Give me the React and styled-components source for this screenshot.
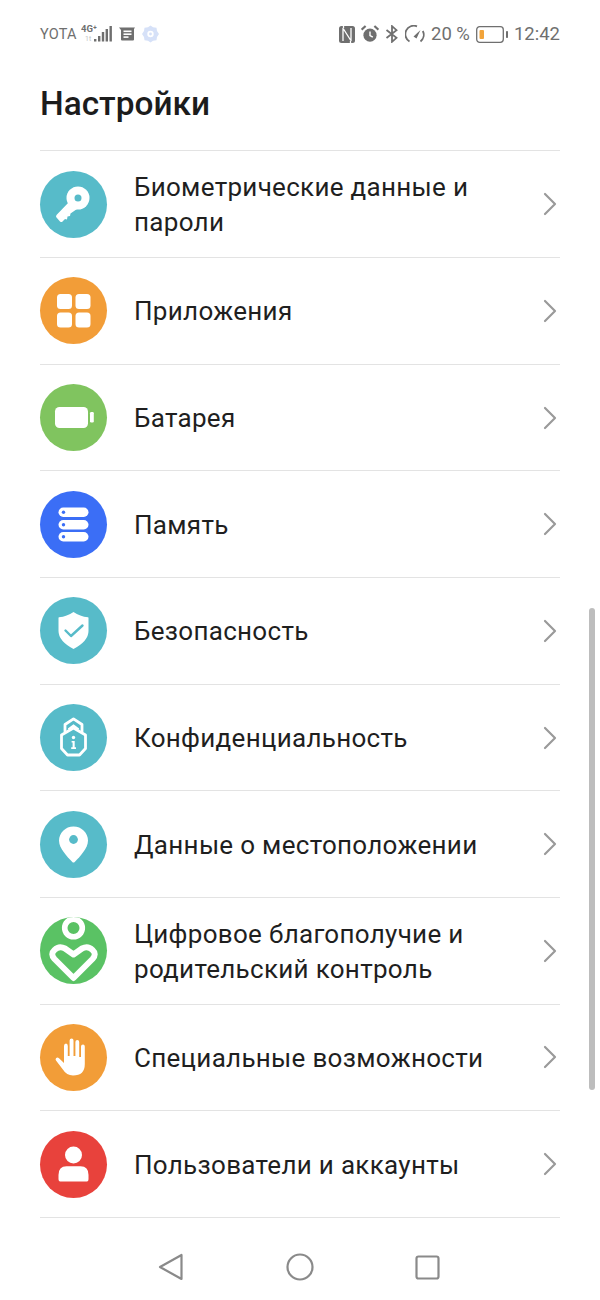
import React from 'react';
import styled, { createGlobalStyle } from 'styled-components';

const GlobalStyle = createGlobalStyle`
  html, body { margin: 0; padding: 0; background: #fff; }
  body { font-family: Roboto, "Noto Sans", sans-serif; }
`;

const Screen = styled.div`
  position: relative;
  width: 600px;
  height: 1300px;
  overflow: hidden;
  background: #fff;
  display: flex;
  flex-direction: column;
`;

const StatusBar = styled.div`
  height: 68px;
  flex: none;
  padding: 0 40px;
  display: flex;
  align-items: center;
  justify-content: space-between;
  color: #6f6f6f;
`;

const StatusGroup = styled.div`
  display: flex;
  align-items: center;
  gap: ${p => p.$gap || 6}px;
`;

const Carrier = styled.span`
  font-size: 14.5px;
  letter-spacing: 0.2px;
`;

const StatusText = styled.span`
  font-size: 18.5px;
`;

const Title = styled.h1`
  margin: 0;
  padding: 0 40px;
  height: 82.4px;
  flex: none;
  font-size: 33.4px;
  line-height: 72px;
  font-weight: 500;
  color: #1c1c1c;
`;

const List = styled.div`
  margin: 0 40px;
  border-top: 1px solid #e3e3e3;
`;

const Row = styled.div`
  height: 106.67px;
  box-sizing: border-box;
  border-bottom: 1px solid #e3e3e3;
  display: flex;
  align-items: center;
`;

const IconCircle = styled.div`
  width: 67px;
  height: 67px;
  flex: none;
  border-radius: 50%;
  background: ${p => p.$color};
  overflow: hidden;
  margin-right: 27px;

  svg { display: block; }
`;

const Label = styled.div`
  flex: 1;
  padding-top: 2px;
  font-size: 26px;
  letter-spacing: 0.3px;
  line-height: 35px;
  color: #1f1f1f;
`;

const Chevron = styled.svg`
  flex: none;
  width: 14px;
  height: 24px;
  margin-right: 3px;
`;

const Scrollbar = styled.div`
  position: absolute;
  left: 589px;
  top: 608px;
  width: 6px;
  height: 482px;
  border-radius: 3px;
  background: #bdbdbd;
`;

const NavBar = styled.div`
  position: absolute;
  left: 0;
  right: 0;
  top: 1218px;
  height: 82px;
  background: #fff;
  display: flex;
  align-items: center;
  padding: 16px 160px 0 158px;
  justify-content: space-between;
  box-sizing: border-box;
`;

const Svg = ({ s = 67, children }) => (
  <svg width={s} height={s} viewBox="0 0 67 67">{children}</svg>
);

const KeyIcon = ({ bg }) => (
  <Svg>
    <circle cx="38" cy="27" r="11.5" fill="#fff" />
    <circle cx="38" cy="27" r="3.5" fill={bg} />
    <path d="M29.5 30.5 L16.5 44 Q15.5 45.5 16.5 46.5 L20 50.5 Q21.5 51.5 22.5 50.5 L25 48 L27 48.5 L27.5 45.5 L30 45 L30.5 42.5 L37 38 Z" fill="#fff" />
  </Svg>
);

const AppsIcon = () => (
  <Svg>
    <rect x="17" y="17" width="15" height="15" rx="3.5" fill="#fff" />
    <rect x="35.5" y="17" width="15" height="15" rx="3.5" fill="#fff" />
    <rect x="17" y="35.5" width="15" height="15" rx="3.5" fill="#fff" />
    <rect x="35.5" y="35.5" width="15" height="15" rx="3.5" fill="#fff" />
  </Svg>
);

const BatteryIcon = () => (
  <Svg>
    <rect x="15" y="23" width="33" height="21" rx="4.5" fill="#fff" />
    <rect x="50" y="28" width="3.8" height="10.5" rx="1.2" fill="#fff" />
  </Svg>
);

const StorageIcon = ({ bg }) => (
  <Svg>
    {[16.5, 29, 41].map(y => (
      <g key={y}>
        <rect x="18.5" y={y} width="30" height="9.5" rx="4.75" fill="#fff" />
        <circle cx="23.5" cy={y + 4.75} r="1.7" fill={bg} />
      </g>
    ))}
  </Svg>
);

const ShieldIcon = ({ bg }) => (
  <Svg>
    <path d="M33.5 15 Q40 19.5 48 20.3 Q48.5 20.4 48.5 21 L48.5 34 Q48.5 44 33.5 52 Q18.5 44 18.5 34 L18.5 21 Q18.5 20.4 19 20.3 Q27 19.5 33.5 15 Z" fill="#fff" />
    <path d="M25.5 33.5 L31 39 L42.5 28.5" fill="none" stroke={bg} strokeWidth="2.4" strokeLinecap="round" strokeLinejoin="round" />
  </Svg>
);

const PrivacyIcon = () => (
  <Svg>
    <path d="M25 28 L25 20.5 L33.5 14.8 L42 20.5 L42 28" fill="none" stroke="#fff" strokeWidth="2.8" strokeLinejoin="round" />
    <path d="M28.5 25.5 L33.5 21.8 L38.5 25.5" fill="none" stroke="#fff" strokeWidth="2.4" />
    <path d="M33.5 24 L45.5 31 L45.5 44.5 L39.5 51 L27.5 51 L21.5 44.5 L21.5 31 Z" fill="none" stroke="#fff" strokeWidth="2.8" strokeLinejoin="round" />
    <circle cx="33.5" cy="33.5" r="1.7" fill="#fff" />
    <path d="M31.6 37 L34.7 37 L34.7 43.2 L36 43.2 L36 45 L31.2 45 L31.2 43.2 L32.6 43.2 L32.6 38.6 L31.6 38.6 Z" fill="#fff" />
  </Svg>
);

const PinIcon = ({ bg }) => (
  <Svg>
    <path d="M33.5 15.5 C41.6 15.5 48 21.8 48 29.7 C48 37 40 45.5 34.7 51 Q33.5 52.2 32.3 51 C27 45.5 19 37 19 29.7 C19 21.8 25.4 15.5 33.5 15.5 Z" fill="#fff" />
    <circle cx="33.5" cy="28.5" r="4.4" fill={bg} />
  </Svg>
);

const WellbeingIcon = () => (
  <Svg>
    <circle cx="33.5" cy="11" r="8.8" fill="none" stroke="#fff" strokeWidth="5.6" />
    <path d="M33.5 61 L14.5 42 Q10 37 14.5 33 Q19 28.5 25 31.5 L33.5 37.5 L42 31.5 Q48 28.5 52.5 33 Q57 37 52.5 42 Z" fill="none" stroke="#fff" strokeWidth="6" strokeLinejoin="round" />
  </Svg>
);

const HandIcon = () => (
  <Svg>
    <path d="M24 33 L24 22 Q24 19.5 26 19.5 Q27.8 19.5 27.8 22 L27.8 32 L29.6 32 L29.6 16.5 Q29.6 14.5 31.6 14.5 Q33.5 14.5 33.5 16.5 L33.5 32 L35.4 32 L35.4 18 Q35.4 16 37.3 16 Q39.2 16 39.2 18 L39.2 33 L41 33 L41 22.5 Q41 20.5 43 20.5 Q44.8 20.5 44.8 22.5 L44.8 40 Q44.8 51.5 33 51.5 Q26.5 51.5 22.5 45 L16 36.5 Q15 35 16.2 34 Q17.6 33 19 34.2 L24 39 Z" fill="#fff" />
  </Svg>
);

const UserIcon = () => (
  <Svg>
    <circle cx="33.5" cy="24" r="8.5" fill="#fff" />
    <path d="M26.5 35.3 L40.5 35.3 Q48.5 35.3 48.5 44 L48.5 48 Q48.5 50.6 46 50.6 L21 50.6 Q18.5 50.6 18.5 48 L18.5 44 Q18.5 35.3 26.5 35.3 Z" fill="#fff" />
  </Svg>
);

const TEAL = '#57bbc9';

const items = [
  { label: ['Биометрические данные и', 'пароли'], color: TEAL, Icon: KeyIcon },
  { label: ['Приложения'], color: '#f29d38', Icon: AppsIcon },
  { label: ['Батарея'], color: '#80c45f', Icon: BatteryIcon },
  { label: ['Память'], color: '#3b6ef6', Icon: StorageIcon },
  { label: ['Безопасность'], color: TEAL, Icon: ShieldIcon },
  { label: ['Конфиденциальность'], color: TEAL, Icon: PrivacyIcon },
  { label: ['Данные о местоположении'], color: TEAL, Icon: PinIcon },
  { label: ['Цифровое благополучие и', 'родительский контроль'], color: '#5ac264', Icon: WellbeingIcon },
  { label: ['Специальные возможности'], color: '#f29d38', Icon: HandIcon },
  { label: ['Пользователи и аккаунты'], color: '#e8423c', Icon: UserIcon },
];

const SignalIcon = () => (
  <svg width="31" height="24" viewBox="0 0 31 24">
    <text x="0" y="10" fontSize="9.5" fontWeight="700" fill="#6f6f6f" fontFamily="Roboto, sans-serif">4G⁺</text>
    <text x="4" y="19" fontSize="7" fill="#c4c4c4" fontFamily="Roboto, sans-serif">1t</text>
    <rect x="13" y="17" width="2.4" height="2.5" fill="#6f6f6f" />
    <rect x="17" y="14" width="2.4" height="5.5" fill="#6f6f6f" />
    <rect x="20.8" y="10" width="2.4" height="9.5" fill="#6f6f6f" />
    <rect x="24.6" y="7" width="2.4" height="12.5" fill="#6f6f6f" />
    <rect x="28.5" y="4" width="2.4" height="15.5" fill="#6f6f6f" />
  </svg>
);

const NewsIcon = () => (
  <svg width="16" height="14" viewBox="0 0 16 14">
    <path d="M0 0.5 L16 0.5 L15 2 L15 12.5 Q15 13.5 14 13.5 L3 13.5 Q2 13.5 2 12.5 L2 3 L0 0.5 Z" fill="#6f6f6f" />
    <rect x="4.5" y="3.5" width="8" height="1.6" fill="#fff" />
    <rect x="4.5" y="6.4" width="8" height="1.6" fill="#fff" />
    <rect x="4.5" y="9.3" width="5" height="1.6" fill="#fff" />
  </svg>
);

const GearIcon = () => (
  <svg width="17" height="18" viewBox="0 0 17 18">
    <path fillRule="evenodd" d="M8.5 0.5 L11 2.3 L14.5 2.8 L15 6 L17 9 L15 12 L14.5 15.2 L11 15.7 L8.5 17.5 L6 15.7 L2.5 15.2 L2 12 L0 9 L2 6 L2.5 2.8 L6 2.3 Z M8.5 5.8 A3.2 3.2 0 1 0 8.5 12.2 A3.2 3.2 0 1 0 8.5 5.8 Z" fill="#d6e1f8" />
    <circle cx="8.5" cy="9" r="1.4" fill="#d6e1f8" />
  </svg>
);

const NfcIcon = () => (
  <svg width="16" height="17" viewBox="0 0 16 17">
    <rect x="0" y="0" width="16" height="17" rx="2.5" fill="#6f6f6f" />
    <path d="M4 2 L4 15 M12 2 L12 15 M4.5 3 L11.5 14 M4.5 0 L4.5 2 M11.5 15 L11.5 17" fill="none" stroke="#fff" strokeWidth="1.3" />
  </svg>
);

const AlarmIcon = () => (
  <svg width="18" height="18" viewBox="0 0 18 18">
    <circle cx="9" cy="10.2" r="6.6" fill="#6f6f6f" />
    <path d="M9 6.5 L9 10.5 L11.8 12.2" fill="none" stroke="#fff" strokeWidth="1.4" />
    <path d="M0.6 4.6 L4.6 1 M17.4 4.6 L13.4 1" stroke="#6f6f6f" strokeWidth="2.2" />
  </svg>
);

const BluetoothIcon = () => (
  <svg width="14" height="18" viewBox="0 0 14 18">
    <path d="M1.5 5 L11.5 12.8 L7 16.8 L7 1.2 L11.5 5.2 L1.5 13" fill="none" stroke="#6f6f6f" strokeWidth="1.8" />
  </svg>
);

const SpeedIcon = () => (
  <svg width="20" height="18" viewBox="0 0 20 18">
    <path d="M4.5 16.5 A8.5 8.5 0 0 1 12 1.3" fill="none" stroke="#6f6f6f" strokeWidth="1.8" />
    <path d="M17.8 6 A8.5 8.5 0 0 1 15.5 16.5" fill="none" stroke="#6f6f6f" strokeWidth="1.8" />
    <path d="M8.5 11.5 L15.5 5 L11.5 13.5 Z" fill="#6f6f6f" />
  </svg>
);

const BatteryStatus = () => (
  <svg width="32" height="17" viewBox="0 0 32 17">
    <rect x="0.7" y="0.7" width="26.6" height="15.6" rx="3" fill="none" stroke="#6f6f6f" strokeWidth="1.3" />
    <rect x="3.5" y="4" width="4.5" height="9" rx="1" fill="#f2a43a" />
    <rect x="30" y="5" width="2" height="7" rx="0.8" fill="#6f6f6f" />
  </svg>
);

const App = () => (
  <Screen>
    <GlobalStyle />
    <StatusBar>
      <StatusGroup $gap={7}>
        <StatusGroup $gap={4}>
          <Carrier>YOTA</Carrier>
          <SignalIcon />
        </StatusGroup>
        <NewsIcon />
        <GearIcon />
      </StatusGroup>
      <StatusGroup $gap={6}>
        <NfcIcon />
        <AlarmIcon />
        <BluetoothIcon />
        <SpeedIcon />
        <StatusText>20 %</StatusText>
        <BatteryStatus />
        <StatusText>12:42</StatusText>
      </StatusGroup>
    </StatusBar>
    <Title>Настройки</Title>
    <List>
      {items.map(({ label, color, Icon }) => (
        <Row key={label[0]}>
          <IconCircle $color={color}>
            <Icon bg={color} />
          </IconCircle>
          <Label>
            {label.map(line => <div key={line}>{line}</div>)}
          </Label>
          <Chevron viewBox="0 0 14 24">
            <path d="M2 2 L12 12 L2 22" fill="none" stroke="#9a9a9a" strokeWidth="2.2" strokeLinecap="round" strokeLinejoin="round" />
          </Chevron>
        </Row>
      ))}
    </List>
    <Scrollbar />
    <NavBar>
      <svg width="26" height="28" viewBox="0 0 26 28">
        <path d="M23.5 2 L23.5 26 L2 14 Z" fill="none" stroke="#8a8a8a" strokeWidth="2.2" strokeLinejoin="round" />
      </svg>
      <svg width="28" height="28" viewBox="0 0 28 28">
        <circle cx="14" cy="14" r="12.5" fill="none" stroke="#8a8a8a" strokeWidth="2.2" />
      </svg>
      <svg width="25" height="25" viewBox="0 0 25 25">
        <rect x="1.5" y="1.5" width="22" height="22" rx="2" fill="none" stroke="#8a8a8a" strokeWidth="2.2" />
      </svg>
    </NavBar>
  </Screen>
);

export default App;
